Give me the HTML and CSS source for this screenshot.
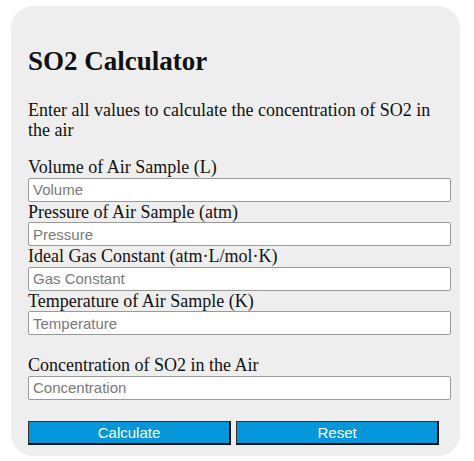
FILE: index.html
```
<!DOCTYPE html>
<html>
<head>
<meta charset="utf-8">
<link rel="stylesheet" href="styles.css">
</head>
<body>
<div class="card">
  <h1 class="title">SO2 Calculator</h1>
  <p class="intro">Enter all values to calculate the concentration of SO2 in the air</p>
  <div class="field">
    <label class="label">Volume of Air Sample (L)</label>
    <input class="input" type="text" placeholder="Volume">
  </div>
  <div class="field">
    <label class="label">Pressure of Air Sample (atm)</label>
    <input class="input" type="text" placeholder="Pressure">
  </div>
  <div class="field">
    <label class="label">Ideal Gas Constant (atm·L/mol·K)</label>
    <input class="input" type="text" placeholder="Gas Constant">
  </div>
  <div class="field">
    <label class="label">Temperature of Air Sample (K)</label>
    <input class="input" type="text" placeholder="Temperature">
  </div>
  <div class="field result">
    <label class="label">Concentration of SO2 in the Air</label>
    <input class="input" type="text" placeholder="Concentration">
  </div>
  <div class="buttons">
    <button class="btn">Calculate</button>
    <button class="btn">Reset</button>
  </div>
</div>
</body>
</html>
```
FILE: styles.css
```
html, body {
  margin: 0;
  padding: 0;
  background: #ffffff;
}
body {
  padding: 6px 0 0 11px;
  font-family: "Liberation Serif", "Times New Roman", serif;
  color: #111;
}
.card {
  width: 449px;
  box-sizing: border-box;
  background: #eeeeee;
  border-radius: 22px;
  padding: 20px 9px 11px 17px;
}
.title {
  font-size: 27px;
  font-weight: bold;
  margin: 20px 0 23px 0;
  line-height: 31px;
}
.intro {
  font-size: 18px;
  line-height: 20px;
  margin: 0 0 17px 0;
}
.field {
  display: flex;
  flex-direction: column;
}
.label {
  font-size: 18px;
  line-height: 20.5px;
}
.input {
  height: 24px;
  box-sizing: border-box;
  border: 1px solid #9a9a9a;
  border-radius: 2px;
  background: #fff;
  font-family: "Liberation Sans", Arial, sans-serif;
  font-size: 15px;
  padding: 0 4px;
  margin: 0;
}
.input::placeholder {
  color: #7a7a7a;
}
.result {
  margin-top: 20px;
}
.buttons {
  display: flex;
  gap: 5px;
  margin-top: 21px;
}
.btn {
  width: 48%;
  height: 24px;
  box-sizing: border-box;
  background: #0595d9;
  color: #fff;
  border: 1px solid #333;
  border-right: 2px solid #111;
  border-bottom: 2px solid #111;
  font-family: "Liberation Sans", Arial, sans-serif;
  font-size: 15px;
  padding: 0;
}
```
